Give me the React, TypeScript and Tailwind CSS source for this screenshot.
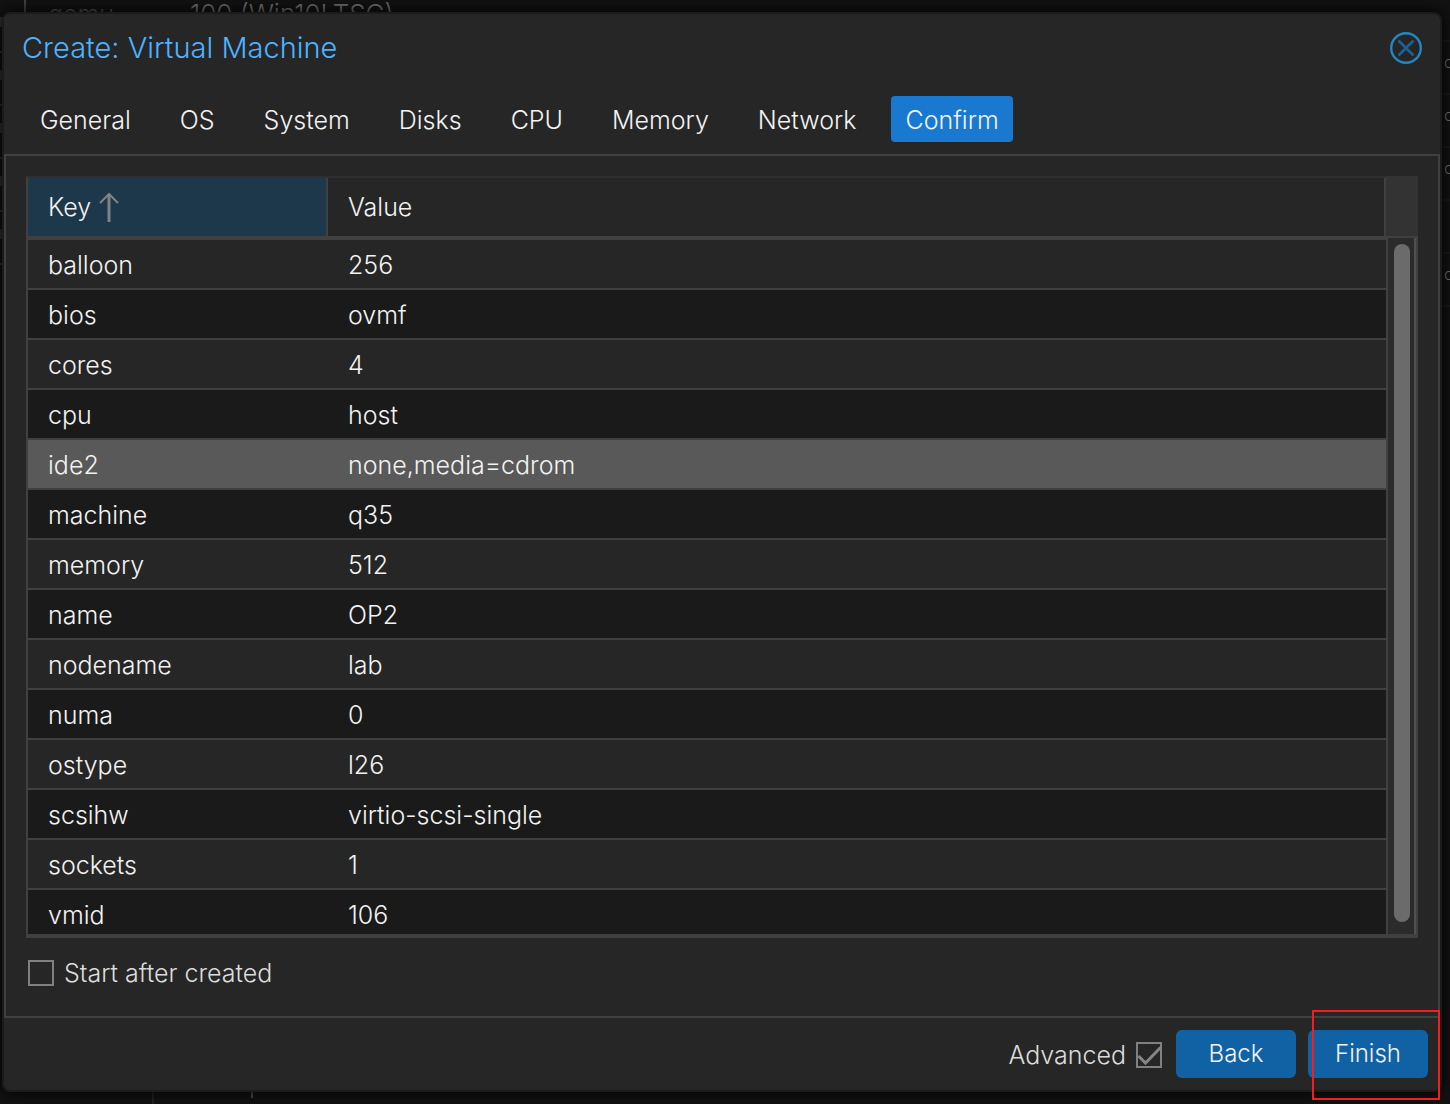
import clsx from "clsx"

const tabs = ["General", "OS", "System", "Disks", "CPU", "Memory", "Network", "Confirm"]

const rows = [
  { key: "balloon", value: "256" },
  { key: "bios", value: "ovmf" },
  { key: "cores", value: "4" },
  { key: "cpu", value: "host" },
  { key: "ide2", value: "none,media=cdrom" },
  { key: "machine", value: "q35" },
  { key: "memory", value: "512" },
  { key: "name", value: "OP2" },
  { key: "nodename", value: "lab" },
  { key: "numa", value: "0" },
  { key: "ostype", value: "l26" },
  { key: "scsihw", value: "virtio-scsi-single" },
  { key: "sockets", value: "1" },
  { key: "vmid", value: "106" },
]

// right-hand column of the masked page, one entry per row
const usage = ["o", "o", "o", "", "o"]

// the page behind the dialog, dimmed by the modal mask
function Backdrop() {
  return (
    <div aria-hidden="true" className="absolute inset-0 overflow-hidden text-[#707070]">
      <div className="absolute top-0 left-6 h-3 w-0.5 bg-[#444]" />
      <div className="absolute top-0 left-12 text-[#505050] leading-7">qemu</div>
      <div className="absolute top-0 left-[190px] text-[26px] leading-7">100 (Win10LTSC)</div>
      <div className="absolute top-0 left-0 w-1">
        {usage.map((_, i) => (
          <div key={i} className="flex h-[53px] items-end border-b-2 border-[#333] pb-6">
            <div className="h-2.5 w-full bg-[#333]" />
          </div>
        ))}
      </div>
      <div className="absolute top-10 right-0 w-2.5 border-t-2 border-[#1a1a1a]">
        {usage.map((u, i) => (
          <div key={i} className="h-[53px] border-b-2 border-[#1a1a1a] pl-1 text-base leading-10">
            {u}
          </div>
        ))}
      </div>
      <div className="absolute bottom-0 left-[152px] h-3 w-0.5 bg-[#222]" />
      <div className="absolute bottom-1.5 left-[251px] h-2 w-0.5 bg-[#4a4a4a]" />
    </div>
  )
}

function CloseIcon() {
  return (
    <svg viewBox="0 0 32 32" className="size-8" fill="none">
      <circle cx="16" cy="16" r="14.8" stroke="#2487c2" strokeWidth="2.4" />
      <path d="M8.5 8.5 L23.5 23.5 M23.5 8.5 L8.5 23.5" stroke="#1a6197" strokeWidth="2.6" />
    </svg>
  )
}

function SortArrow() {
  return (
    <svg viewBox="0 0 20 30" className="h-[30px] w-5" fill="none" stroke="#808384" strokeWidth="2">
      <path d="M10 30 V2" strokeWidth="3" />
      <path d="M1 11 L10 2 L19 11" />
    </svg>
  )
}

function CheckBox({ id, checked = false }: { id: string; checked?: boolean }) {
  return (
    <span className="relative size-[26px]">
      <input
        id={id}
        type="checkbox"
        defaultChecked={checked}
        className="peer block size-[26px] appearance-none border-2 border-[#808080]"
      />
      <svg
        viewBox="0 0 26 26"
        className="pointer-events-none absolute inset-0 hidden size-[26px] peer-checked:block"
        fill="none"
      >
        <path d="M2.5 14 L9.5 21 L24.5 5.5" stroke="#858585" strokeWidth="3" />
      </svg>
    </span>
  )
}

export default function App() {
  return (
    <div className="relative min-h-screen bg-[#121212] pt-3 pr-2 pl-0.5 font-['Inter',sans-serif] text-[25px] leading-8 font-light text-[#f2f2f2]">
      <Backdrop />
      <div
        role="dialog"
        aria-labelledby="title"
        className="relative rounded-lg border-2 border-[#1b1b1b] bg-[#262626] shadow-[0_0_16px_#000]"
      >
        <header className="flex items-center justify-between px-[18px] pt-4">
          <h1 id="title" className="text-[29px] leading-9 text-[#4db2ff]">Create: Virtual Machine</h1>
          <button type="button" aria-label="Close">
            <CloseIcon />
          </button>
        </header>

        <nav role="tablist" className="flex gap-[21px] px-[22px] pt-[30px] pb-3">
          {tabs.map((tab) => (
            <button
              key={tab}
              type="button"
              role="tab"
              aria-selected={tab === "Confirm"}
              className={clsx("h-[46px] rounded px-3.5 pt-0.5", tab === "Confirm" && "bg-[#1979d0]")}
            >
              {tab}
            </button>
          ))}
        </nav>

        <main className="border-2 border-[#404040] px-5 pt-5 pb-[27px]">
          <div className="flex">
            <div className="h-[762px] flex-1 overflow-hidden border-t-2 border-b-4 border-l-2 border-[#404040] border-t-[#303030]">
              <table className="w-full table-fixed border-separate border-spacing-0 text-left">
                <thead>
                  <tr>
                    <th className="h-[62px] w-[300px] border-r-2 border-b-4 border-[#404040] bg-[#1d374b] pl-5 font-light">
                      <span className="flex items-center gap-2">
                        Key <SortArrow />
                      </span>
                    </th>
                    <th className="h-[62px] border-r-2 border-b-4 border-[#404040] pl-5 font-light">Value</th>
                  </tr>
                </thead>
                <tbody>
                  {rows.map((row) => (
                    <tr
                      key={row.key}
                      className={row.key === "ide2" ? "bg-[#595959]" : "odd:bg-[#262626] even:bg-[#1a1a1a]"}
                    >
                      <td className="h-[50px] border-b-2 border-[#404040] pt-0.5 pl-5">{row.key}</td>
                      <td className="h-[50px] border-b-2 border-[#404040] pt-0.5 pl-5">{row.value}</td>
                    </tr>
                  ))}
                </tbody>
              </table>
            </div>
            {/* scrollbar */}
            <div className="flex w-8 flex-col">
              <div className="h-[60px] bg-[#333]" />
              <div className="flex-1 border-t-2 border-r-2 border-b-4 border-l-2 border-[#404040]">
                <div className="h-full border-r-2 border-[#505050] bg-[#2b2b2b] px-1.5 pt-1.5 pb-3">
                  <div className="h-full w-4 rounded-full bg-[#6b6b6b]" />
                </div>
              </div>
            </div>
          </div>

          <div className="mt-[19px] flex items-center gap-2.5 pl-0.5 text-[#dcdcdc]">
            <CheckBox id="start" />
            <label htmlFor="start">Start after created</label>
          </div>
        </main>

        <footer className="flex items-center justify-end gap-3 py-3 pr-3">
          <div className="flex items-center gap-2.5 pt-0.5 pr-0.5 text-[#dcdcdc]">
            <label htmlFor="advanced">Advanced</label>
            <CheckBox id="advanced" checked />
          </div>
          <button type="button" className="h-12 w-[120px] rounded-md bg-[#1162a5] text-[24px]">Back</button>
          <div className="relative">
            <button type="button" className="h-12 w-[120px] rounded-md bg-[#1162a5] text-[24px]">Finish</button>
            <div className="pointer-events-none absolute -top-5 -right-3 -bottom-[22px] left-1 border-2 border-[#f51d1d]" />
          </div>
        </footer>
      </div>
    </div>
  )
}
